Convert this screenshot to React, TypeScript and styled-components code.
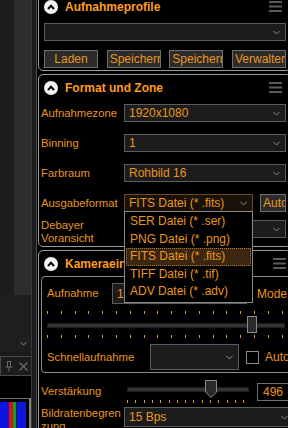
import React from 'react';
import styled, { createGlobalStyle } from 'styled-components';

const orange = '#e8961e';
const bright = '#ff9d1c';

const GlobalStyle = createGlobalStyle`
  html, body {
    margin: 0;
    padding: 0;
    background: #000;
    overflow: hidden;
  }
  body {
    font-family: "Liberation Sans", Arial, sans-serif;
  }
`;

const Frame = styled.div`
  display: flex;
  width: 288px;
  height: 428px;
  overflow: hidden;
  background: #000;
`;

/* ---------- left dock ---------- */

const Dock = styled.div`
  display: flex;
  flex: 0 0 36px;
  background: #1b1b1b;
`;

const DockColumn = styled.div`
  display: flex;
  flex-direction: column;
  width: 31px;
  border-right: 1px solid #3a3a3a;
`;

const DockPanes = styled.div`
  display: grid;
  grid-template-columns: 14px 1fr;
  height: 295px;
  & > div:first-child { background: #1d1d1d; }
  & > div:last-child { background: #2d2d2d; }
`;

const DockCombo = styled.div`
  display: flex;
  align-items: flex-end;
  justify-content: flex-end;
  height: 57px;
  margin-bottom: 4px;
  padding: 0 4px 6px 0;
  box-sizing: border-box;
  background: #1e1e1e;
`;

const ToolHeader = styled.div`
  display: flex;
  align-items: center;
  justify-content: flex-end;
  gap: 6px;
  height: 20px;
  padding-right: 3px;
  border: 1px solid #4a4a4a;
  border-right: none;
  box-sizing: border-box;
  background: #1c1c1c;
`;

const ToolBlank = styled.div`
  height: 22px;
  background: #000;
`;

const Histogram = styled.div`
  flex: 1;
  display: grid;
  grid-template-columns: 9px 4px 3px 1px 9px;
  padding-top: 3px;
  border-top: 1px solid #707070;
  border-right: 2px solid #808080;
  background: #000;
`;

const Bar = styled.div<{ $c: string }>`
  background: ${(p) => p.$c};
`;

/* ---------- main column ---------- */

const Main = styled.div`
  flex: 1;
  display: flex;
  flex-direction: column;
  gap: 3px;
  margin-top: -7px;
  border-left: 1px solid #4a4a4a;
  padding-left: 1px;
  min-width: 0;
`;

const Section = styled.section<{ $h: number }>`
  position: relative;
  display: flex;
  flex-direction: column;
  width: 253px;
  height: ${(p) => p.$h}px;
  border: 1px solid #9a9a9a;
  border-radius: 5px;
  padding: 6px 4px 4px 2px;
  box-sizing: border-box;
  flex-shrink: 0;
`;

const Header = styled.div`
  display: flex;
  align-items: center;
  gap: 7px;
  height: 13px;
  padding-left: 3px;
`;

const Title = styled.span`
  flex: 1;
  color: ${bright};
  font-size: 12px;
  font-weight: bold;
  white-space: nowrap;
`;

const Circle = styled.span`
  display: flex;
  align-items: center;
  justify-content: center;
  width: 14px;
  height: 14px;
  border-radius: 50%;
  background: #f2f2f2;
  flex-shrink: 0;
`;

const Menu = styled.span`
  display: flex;
  margin-right: 4px;
`;

const Row = styled.div<{ $top: number; $cols?: string }>`
  display: grid;
  grid-template-columns: ${(p) => p.$cols || '83px 1fr'};
  align-items: center;
  margin-top: ${(p) => p.$top}px;
  min-height: 18px;
`;

const Label = styled.span`
  color: ${orange};
  font-size: 11.3px;
  line-height: 13px;
  white-space: nowrap;
`;

const Select = styled.div<{ $h?: number; $focus?: boolean; $inset?: number }>`
  display: flex;
  align-items: center;
  justify-content: space-between;
  height: ${(p) => p.$h || 18}px;
  margin-left: ${(p) => p.$inset || 0}px;
  padding: 0 5px 0 4px;
  box-sizing: border-box;
  background: ${(p) => (p.$focus ? '#1a120a' : '#1c1c1c')};
  border: 1px solid ${(p) => (p.$focus ? '#6b4a22' : '#5c5c5c')};
  color: ${orange};
  font-size: 12px;
  white-space: nowrap;
  overflow: hidden;
`;

const Button = styled.button`
  height: 18px;
  padding: 0 2px;
  background: #2b2b2b;
  border: 1px solid #6e6e6e;
  color: ${orange};
  font-family: inherit;
  font-size: 12px;
  white-space: nowrap;
  overflow: hidden;
  text-align: center;
`;

const ButtonRow = styled.div`
  display: grid;
  grid-template-columns: repeat(4, 54px);
  justify-content: space-between;
  margin: 9px 0 0 3px;
`;

const FormatCell = styled.div`
  display: grid;
  grid-template-columns: 129px 1fr;
  gap: 7px;
`;

const DropList = styled.ul`
  position: absolute;
  left: 85px;
  top: 136px;
  width: 129px;
  margin: 0;
  padding: 1px 0;
  list-style: none;
  background: #000;
  border: 1px solid #8a8a8a;
  box-sizing: border-box;
  z-index: 5;
`;

const DropItem = styled.li<{ $active?: boolean }>`
  height: 17.5px;
  line-height: 15.5px;
  padding-left: 3px;
  margin: 0 1px;
  color: ${orange};
  font-size: 12px;
  white-space: nowrap;
  box-sizing: border-box;
  background: ${(p) => (p.$active ? '#3b2612' : 'transparent')};
  border: 1px dotted ${(p) => (p.$active ? '#b07030' : 'transparent')};
`;

const Group = styled.div`
  display: flex;
  flex-direction: column;
  margin: 6px -10px 0 0;
  padding: 6px 0 0 5px;
  border: 1px solid #8a8a8a;
  border-radius: 4px;
  height: 97px;
  box-sizing: border-box;
`;

const InlineText = styled.span<{ $pad?: number }>`
  padding-left: ${(p) => p.$pad || 0}px;
  color: ${orange};
  font-size: 12px;
  white-space: nowrap;
`;

const Ticks = styled.div<{ $step: number; $gap?: number }>`
  height: 3px;
  margin-top: ${(p) => p.$gap || 0}px;
  background-image: repeating-linear-gradient(
    to right,
    ${orange} 0 1px,
    transparent 1px ${(p) => p.$step}px
  );
`;

const Slider = styled.div<{ $w?: number; $top?: number }>`
  display: flex;
  flex-direction: column;
  width: ${(p) => (p.$w ? `${p.$w}px` : 'auto')};
  margin-top: ${(p) => p.$top || 0}px;
`;

const Track = styled.div<{ $h: number; $m?: number }>`
  position: relative;
  height: ${(p) => p.$h}px;
  margin: ${(p) => p.$m || 0}px 0;
  &::before {
    content: '';
    position: absolute;
    left: 0;
    right: 0;
    top: 50%;
    height: 3px;
    margin-top: -2px;
    background: #333;
    border: 1px solid #1e1e1e;
  }
`;

const Thumb = styled.div<{ $x: number }>`
  position: absolute;
  left: ${(p) => p.$x}px;
  top: 0;
  width: 10px;
  height: 100%;
  background: #2a2a2a;
  border: 1px solid #8a8a8a;
  box-sizing: border-box;
`;

const PointerThumb = styled.svg<{ $x: number }>`
  position: absolute;
  left: ${(p) => p.$x}px;
  top: 0;
`;

const Check = styled.span`
  width: 13px;
  height: 13px;
  border: 1px solid #8a8a8a;
  box-sizing: border-box;
`;

const ValueBox = styled.div`
  display: flex;
  align-items: center;
  justify-content: center;
  height: 18px;
  border: 1px solid #6e6e6e;
  color: ${orange};
  font-size: 12px;
  box-sizing: border-box;
`;

const Chevron = () => (
  <svg width="7" height="5" viewBox="0 0 7 5">
    <path d="M0.5 1 L3.5 4 L6.5 1" stroke="#8a8a8a" strokeWidth="1" fill="none" />
  </svg>
);

const UpIcon = () => (
  <Circle>
    <svg width="8" height="6" viewBox="0 0 8 6">
      <path d="M1 5 L4 1.8 L7 5" stroke="#000" strokeWidth="2" fill="none" />
    </svg>
  </Circle>
);

const Hamburger = () => (
  <Menu>
    <svg width="13" height="11" viewBox="0 0 13 11">
      <rect x="0" y="0" width="13" height="2" fill="#5a5a5a" />
      <rect x="0" y="4.5" width="13" height="2" fill="#5a5a5a" />
      <rect x="0" y="9" width="13" height="2" fill="#5a5a5a" />
    </svg>
  </Menu>
);

const SectionHead: React.FC<{ title: string }> = ({ title }) => (
  <Header>
    <UpIcon />
    <Title>{title}</Title>
    <Hamburger />
  </Header>
);

const formats = [
  'SER Datei (* .ser)',
  'PNG Datei (* .png)',
  'FITS Datei (* .fits)',
  'TIFF Datei (* .tif)',
  'ADV Datei (* .adv)',
];

export default function App() {
  return (
    <>
      <GlobalStyle />
      <Frame>
        <Dock>
          <DockColumn>
            <DockPanes>
              <div />
              <div />
            </DockPanes>
            <DockCombo>
              <Chevron />
            </DockCombo>
            <ToolHeader>
              <svg width="8" height="11" viewBox="0 0 8 11">
                <path d="M2 0.5 H6 M2.5 0.5 V6 M5.5 0.5 V6 M0.5 6 H7.5 M4 6 V10.5" stroke="#6a6a6a" strokeWidth="1" fill="none" />
              </svg>
              <svg width="9" height="9" viewBox="0 0 9 9">
                <path d="M0.5 0.5 L8.5 8.5 M8.5 0.5 L0.5 8.5" stroke="#6a6a6a" strokeWidth="1.3" />
              </svg>
            </ToolHeader>
            <ToolBlank />
            <Histogram>
              <Bar $c="#0a16e0" />
              <Bar $c="#e01010" />
              <Bar $c="#10a020" />
              <Bar $c="#202020" />
              <Bar $c="#0a16e0" />
            </Histogram>
          </DockColumn>
        </Dock>

        <Main>
          <Section $h={78}>
            <SectionHead title="Aufnahmeprofile" />
            <Row $top={10} $cols="1fr">
              <Select $inset={3}>
                <span />
                <Chevron />
              </Select>
            </Row>
            <ButtonRow>
              <Button>Laden</Button>
              <Button>Speicherr</Button>
              <Button>Speicherr</Button>
              <Button>Verwalter</Button>
            </ButtonRow>
          </Section>

          <Section $h={173}>
            <SectionHead title="Format und Zone" />
            <Row $top={10}>
              <Label>Aufnahmezone</Label>
              <Select>
                <span>1920x1080</span>
                <Chevron />
              </Select>
            </Row>
            <Row $top={12}>
              <Label>Binning</Label>
              <Select>
                <span>1</span>
                <Chevron />
              </Select>
            </Row>
            <Row $top={12}>
              <Label>Farbraum</Label>
              <Select>
                <span>Rohbild 16</span>
                <Chevron />
              </Select>
            </Row>
            <Row $top={12}>
              <Label>Ausgabeformat</Label>
              <FormatCell>
                <Select $focus>
                  <span>FITS Datei (* .fits)</span>
                  <Chevron />
                </Select>
                <Button>Auto</Button>
              </FormatCell>
            </Row>
            <Row $top={7}>
              <Label>
                Debayer
                <br />
                Voransicht
              </Label>
              <Select style={{ alignSelf: 'start', marginTop: 1 }}>
                <span />
                <Chevron />
              </Select>
            </Row>
            <DropList>
              {formats.map((f, i) => (
                <DropItem key={f} $active={i === 2}>
                  {f}
                </DropItem>
              ))}
            </DropList>
          </Section>

          <Section $h={190} style={{ paddingRight: 0 }}>
            <SectionHead title="Kameraeinstellungen" />
            <Group>
              <Row $top={0} $cols="65px 135px 1fr">
                <Label>Aufnahme</Label>
                <Select $h={21}>
                  <span>10</span>
                </Select>
                <InlineText $pad={10}>Mode</InlineText>
              </Row>
              <Slider $w={238} $top={7}>
                <Ticks $step={13.8} />
                <Track $h={17} $m={2}>
                  <Thumb $x={200} />
                </Track>
                <Ticks $step={13.8} />
              </Slider>
              <Row $top={6} $cols="103px 89px 7px 13px 6px auto">
                <Label>Schnellaufnahme</Label>
                <Select $h={26}>
                  <span />
                  <Chevron />
                </Select>
                <span />
                <Check />
                <span />
                <InlineText>Auto</InlineText>
              </Row>
            </Group>
            <Row $top={7} $cols="86px 122px 8px 32px">
              <Label>Verstärkung</Label>
              <Slider>
                <Track $h={18}>
                  <PointerThumb $x={78} width="12" height="18" viewBox="0 0 12 18">
                    <path d="M0.5 0.5 H11.5 V12 L6 17.5 L0.5 12 Z" fill="#2a2a2a" stroke="#8a8a8a" />
                  </PointerThumb>
                </Track>
                <Ticks $step={8.3} $gap={2} />
              </Slider>
              <span />
              <ValueBox>496</ValueBox>
            </Row>
            <Row $top={4}>
              <Label>
                Bildratenbegren
                <br />
                zung
              </Label>
              <Select $h={20} style={{ alignSelf: 'start', marginRight: -4 }}>
                <span>15 Bps</span>
                <Chevron />
              </Select>
            </Row>
          </Section>
        </Main>
      </Frame>
    </>
  );
}
